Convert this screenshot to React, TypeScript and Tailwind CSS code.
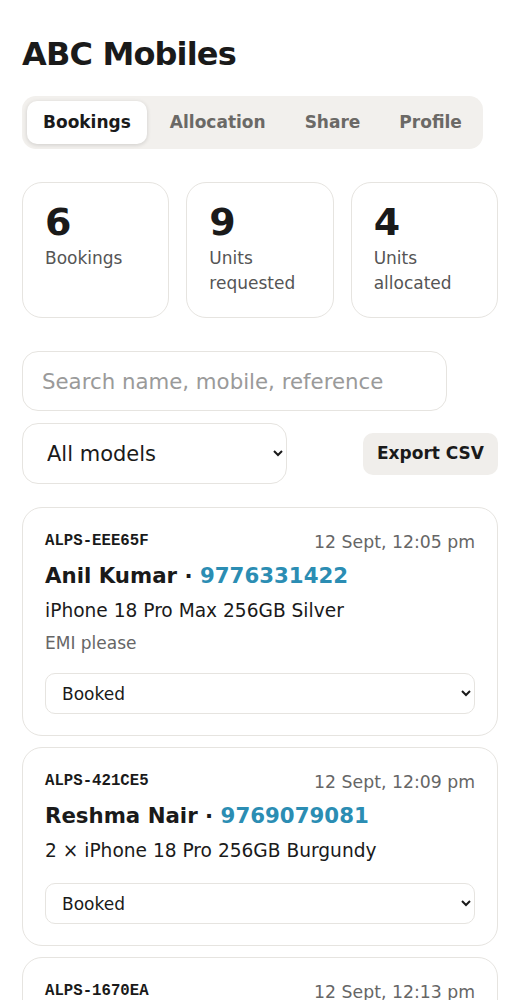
import React, { useState } from "react";

const bookings = [
  {
    ref: "ALPS-EEE65F",
    time: "12 Sept, 12:05 pm",
    name: "Anil Kumar",
    mobile: "9776331422",
    product: "iPhone 18 Pro Max 256GB Silver",
    note: "EMI please",
  },
  {
    ref: "ALPS-421CE5",
    time: "12 Sept, 12:09 pm",
    name: "Reshma Nair",
    mobile: "9769079081",
    product: "2 × iPhone 18 Pro 256GB Burgundy",
    note: "",
  },
  {
    ref: "ALPS-1670EA",
    time: "12 Sept, 12:13 pm",
    name: "Vikram Singh",
    mobile: "9812345670",
    product: "iPhone 18 Pro 512GB Silver",
    note: "",
  },
];

const tabs = ["Bookings", "Allocation", "Share", "Profile"];

function App() {
  const [tab, setTab] = useState("Bookings");
  const [search, setSearch] = useState("");

  return (
    <div className="min-h-screen bg-white px-[22px] pt-[34px] pb-10 text-[#1a1a1a] [font-family:'DejaVu_Sans',sans-serif]">
      <h1 className="text-[32px] font-bold leading-[40px] tracking-[-0.85px]">ABC Mobiles</h1>

      <div className="mt-[22px] inline-flex gap-[7px] rounded-[14px] bg-[#f2f0ed] p-[5px]">
        {tabs.map((t) => (
          <button
            key={t}
            onClick={() => setTab(t)}
            className={
              t === tab
                ? "h-[43px] rounded-[10px] bg-white px-4 text-[17px] font-bold text-[#1a1a1a] shadow-[0_1px_4px_rgba(0,0,0,0.15)]"
                : "h-[43px] rounded-[10px] px-4 text-[17px] font-bold text-[#6b6966]"
            }
          >
            {t}
          </button>
        ))}
      </div>

      <div className="mt-[33px] grid grid-cols-3 gap-[17px]">
        {[
          ["6", "Bookings"],
          ["9", "Units requested"],
          ["4", "Units allocated"],
        ].map(([n, label]) => (
          <div key={label} className="h-[136px] rounded-[20px] border border-[#e6e4e0] px-[22px] pt-[17px]">
            <div className="text-[38px] font-bold leading-[44px]">{n}</div>
            <div className="mt-[2px] text-[17px] leading-[25px] text-[#555]">{label}</div>
          </div>
        ))}
      </div>

      <input
        value={search}
        onChange={(e) => setSearch(e.target.value)}
        placeholder="Search name, mobile, reference"
        className="mt-[33px] block h-[60px] w-[425px] rounded-[16px] border border-[#e6e4e0] px-[19px] text-[21.3px] outline-none placeholder:text-[#9a9a9a]"
      />

      <div className="mt-[12px] flex items-center justify-between">
        <select className="h-[61px] w-[265px] rounded-[16px] border border-[#e6e4e0] bg-white pl-[20px] pr-[6px] text-[21px] text-[#1a1a1a] outline-none">
          <option>All models</option>
          <option>iPhone 18 Pro</option>
          <option>iPhone 18 Pro Max</option>
        </select>
        <button className="h-[42px] rounded-[10px] bg-[#f0eeeb] px-[14px] text-[17px] font-bold text-[#1a1a1a]">
          Export CSV
        </button>
      </div>

      <div className="mt-[23px] flex flex-col gap-[11px]">
        {bookings.map((b) => (
          <div key={b.ref} className="rounded-[20px] border border-[#e6e4e0] px-[22px] pt-[21px] pb-[21px]">
            <div className="flex items-center justify-between">
              <span className="text-[15.7px] font-bold [font-family:'Liberation_Mono',monospace]">{b.ref}</span>
              <span className="text-[17.3px] leading-[26px] text-[#666]">{b.time}</span>
            </div>
            <div className="mt-[6px] text-[21.3px] font-bold leading-[30px]">
              {b.name} · <span className="text-[#2b8db3]">{b.mobile}</span>
            </div>
            <div className="mt-[6px] text-[18.6px] leading-[28px]">{b.product}</div>
            {b.note && <div className="mt-[6px] text-[17px] leading-[24px] text-[#666]">{b.note}</div>}
            <select className="mt-[18px] block h-[41px] w-full rounded-[10px] border border-[#e6e4e0] bg-white pl-[12px] pr-[6px] text-[17px] text-[#1a1a1a] outline-none">
              <option>Booked</option>
              <option>Allocated</option>
              <option>Delivered</option>
              <option>Cancelled</option>
            </select>
          </div>
        ))}
      </div>
    </div>
  );
}

export default App;
